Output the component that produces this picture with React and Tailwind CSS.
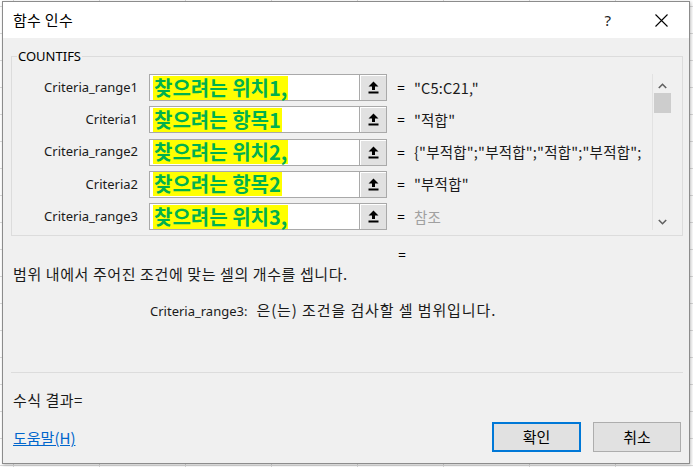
import React from "react";

const FONT = { fontFamily: '"Noto Sans", "Noto Sans CJK KR", sans-serif' };
const KFONT = { fontFamily: '"Noto Sans CJK KR", "Noto Sans", sans-serif' };

function RefIcon() {
  return (
    <svg width="11" height="13" viewBox="0 0 11 13">
      <path d="M5.5 0.5 L10.5 5.5 L7 5.5 L7 9 L4 9 L4 5.5 L0.5 5.5 Z" fill="#000" />
      <rect x="0.5" y="10.5" width="10" height="2" fill="#000" />
    </svg>
  );
}

const rows = [
  { label: "Criteria_range1", hl: "찾으려는 위치1,", value: '"C5:C21,"' },
  { label: "Criteria1", hl: "찾으려는 항목1", value: '"적합"' },
  { label: "Criteria_range2", hl: "찾으려는 위치2,", value: '{"부적합";"부적합";"적합";"부적합";' },
  { label: "Criteria2", hl: "찾으려는 항목2", value: '"부적합"' },
  { label: "Criteria_range3", hl: "찾으려는 위치3,", value: "참조", gray: true },
];

export default function App() {
  return (
    <div
      className="w-[693px] h-[467px] overflow-hidden bg-white pt-[1px] pl-[2px]"
      style={{
        backgroundImage:
          "linear-gradient(to right, #d9d9d9 1px, transparent 1px), linear-gradient(to bottom, #d9d9d9 1px, transparent 1px)",
        backgroundSize: "86px 27px",
        backgroundPosition: "13px 6px",
      }}
    >
      <div
        className="w-[688px] h-[463px] border border-[#8c8c8c] bg-[#f0f0f0] flex flex-col text-[13px] text-[#000] shadow-[1px_1px_3px_rgba(0,0,0,0.25)]"
        style={FONT}
      >
        {/* Title bar */}
        <div className="h-[36px] bg-white flex items-center pl-[10px] pr-[20px] shrink-0">
          <span className="text-[15px] tracking-[0.3px] text-[#000]" style={KFONT}>함수 인수</span>
          <span className="ml-auto text-[15px] text-[#222] mr-[44px]">?</span>
          <svg width="13" height="13" viewBox="0 0 13 13" className="mr-[1px]">
            <path d="M0.5 0.5 L12.5 12.5 M12.5 0.5 L0.5 12.5" stroke="#000" strokeWidth="1.1" />
          </svg>
        </div>

        {/* Body */}
        <div className="flex-1 flex flex-col px-[8px] pt-[11px]">
          <fieldset className="border border-[#dcdcdc] rounded-none m-0 p-0 pb-[5px] w-[672px]">
            <legend className="ml-[5px] px-[1px] text-[13px] leading-[15px] text-[#000]">COUNTIFS</legend>
            <div className="flex pt-[10px]">
              <div className="flex-1 flex flex-col gap-[5.25px] min-w-0">
                {rows.map((r) => (
                  <div key={r.label} className="flex items-center h-[27px] overflow-hidden">
                    <div className="w-[126px] text-right text-[13px] text-[#1a1a1a] shrink-0">{r.label}</div>
                    <div className="ml-[11px] w-[238px] h-[27px] shrink-0 flex border border-[#a9a9a9] bg-white">
                      <div className="flex-1 flex items-center pl-[3px]">
                        <span
                          className="bg-[#ffff00] text-[#00b050] font-bold text-[20px] leading-[24px] h-[24px] px-[1px] whitespace-nowrap"
                          style={KFONT}
                        >
                          {r.hl}
                        </span>
                      </div>
                      <div className="w-[27px] h-full border-l border-[#a9a9a9] bg-[#e1e1e1] flex items-center justify-center shadow-[inset_1px_1px_0_#fff]">
                        <RefIcon />
                      </div>
                    </div>
                    <span className="ml-[10px] text-[14px] w-[10px] shrink-0">=</span>
                    <span
                      className={`ml-[7px] min-w-0 whitespace-nowrap overflow-hidden text-[14.5px] tracking-[0.2px] ${r.gray ? "text-[#a0a0a0]" : "text-[#1a1a1a]"}`}
                      style={KFONT}
                    >
                      {r.value}
                    </span>
                  </div>
                ))}
              </div>
              <div className="w-[19px] ml-[4px] mr-[11px] border-l border-[#e2e2e2] flex flex-col items-center shrink-0 pl-[1px]">
                <svg width="9" height="6" viewBox="0 0 9 6" className="mt-[9px]">
                  <path d="M0.8 5 L4.5 1.3 L8.2 5" stroke="#606060" strokeWidth="1.6" fill="none" />
                </svg>
                <div className="w-[17px] h-[20px] bg-[#cdcdcd] mt-[4px]" />
                <div className="flex-1" />
                <svg width="9" height="6" viewBox="0 0 9 6" className="mb-[5px]">
                  <path d="M0.8 1 L4.5 4.7 L8.2 1" stroke="#606060" strokeWidth="1.6" fill="none" />
                </svg>
              </div>
            </div>
          </fieldset>

          <div className="pl-[387px] mt-[11px] text-[14px] leading-[16px]">=</div>
          <div className="mt-[2px] pl-[2px] text-[15px] tracking-[0.6px] leading-[18px] text-[#1a1a1a]" style={KFONT}>
            범위 내에서 주어진 조건에 맞는 셀의 개수를 셉니다.
          </div>
          <div className="mt-[18px] pl-[139px] leading-[18px] text-[#1a1a1a] flex items-baseline" style={KFONT}>
            <span className="text-[13px]" style={FONT}>Criteria_range3:</span>
            <span className="ml-[9px] text-[15px] tracking-[0.9px]">은(는) 조건을 검사할 셀 범위입니다.</span>
          </div>

          <div className="mt-[52px] h-px bg-[#dcdcdc] w-[672px]" />

          <div className="mt-[18px] pl-[2px] text-[15px] tracking-[0.5px] leading-[18px] text-[#1a1a1a]" style={KFONT}>
            수식 결과=
          </div>

          <div className="mt-[13px] flex items-center">
            <a className="pl-[2px] text-[15px] text-[#0066cc] underline mt-[3px]" style={KFONT}>도움말(H)</a>
            <div className="ml-auto flex gap-[12px] mr-[0px]">
              <button className="w-[89px] h-[30px] border-2 border-[#0078d7] bg-[#e1e1e1] text-[15px] text-[#000]" style={KFONT}>
                확인
              </button>
              <button className="w-[88px] h-[30px] border border-[#adadad] bg-[#e1e1e1] text-[15px] text-[#000]" style={KFONT}>
                취소
              </button>
            </div>
          </div>
        </div>
      </div>
    </div>
  );
}
